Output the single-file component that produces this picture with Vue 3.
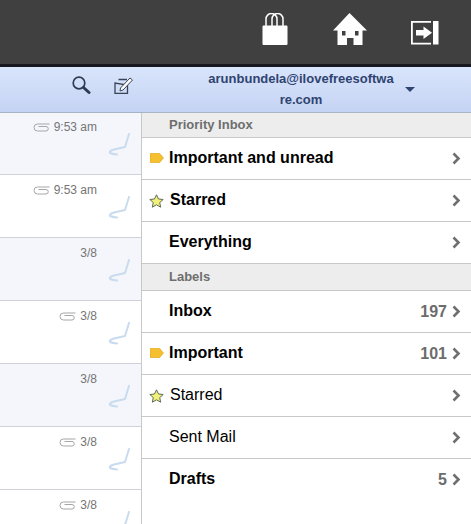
<script setup>
const mails = [
  { time: '9:53 am', clip: true, tint: true },
  { time: '9:53 am', clip: true, tint: false },
  { time: '3/8', clip: false, tint: true },
  { time: '3/8', clip: true, tint: false },
  { time: '3/8', clip: false, tint: true },
  { time: '3/8', clip: true, tint: false },
  { time: '3/8', clip: true, tint: false },
]
const priority = [
  { name: 'Important and unread', icon: 'tag', bold: true },
  { name: 'Starred', icon: 'star', bold: true },
  { name: 'Everything', icon: '', bold: true },
]
const labels = [
  { name: 'Inbox', icon: '', bold: true, count: '197' },
  { name: 'Important', icon: 'tag', bold: true, count: '101' },
  { name: 'Starred', icon: 'star', bold: false },
  { name: 'Sent Mail', icon: '', bold: false },
  { name: 'Drafts', icon: '', bold: true, count: '5' },
]
const sections = [
  { title: 'Priority Inbox', rows: priority },
  { title: 'Labels', rows: labels },
]
</script>

<template>
  <div class="page">
    <header class="top">
      <svg class="ic-bag" width="26" height="33" viewBox="0 0 26 33">
        <path d="M4 13V6a5.500 5.500 0 0 1 11 0v7M10 13V6a5.500 5.500 0 0 1 11 0v7" fill="none" stroke="#fff" stroke-width="1.500"/>
        <path d="M1.500 12.500H24.500a1 1 0 0 1 1 1V31a1 1 0 0 1-1 1H1.500a1 1 0 0 1-1-1V13.500a1 1 0 0 1 1-1z" fill="#fff"/>
      </svg>
      <svg class="ic-home" width="34" height="33" viewBox="0 0 34 33">
        <path fill="#fff" fill-rule="evenodd" d="M16.500 0 34 17.500H29.500V32H20.500V25H14V32H4.500V17.500H0zM9 18v4.500h3.500V18zM22 18v4.500h3.500V18z"/>
      </svg>
      <svg class="ic-exit" width="28" height="24" viewBox="0 0 28 24">
        <path fill="#fff" d="M0 0H20V1.800H1.800V21.700H20V23.500H0zM22 0H27.500V23.500H22z"/>
        <path fill="#fff" d="M5 9H12.500V5.500L21 11.800 12.500 18V14.500H5z"/>
      </svg>
    </header>

    <div class="bar">
      <div class="tools">
        <svg class="ic-search" width="20" height="20" viewBox="0 0 20 20">
          <circle cx="8" cy="8" r="5.800" fill="none" stroke="#2f3b52" stroke-width="1.700"/>
          <path d="M12.500 12.500 18 17.500" stroke="#2f3b52" stroke-width="3" stroke-linecap="round"/>
        </svg>
        <svg class="ic-compose" width="20" height="18" viewBox="0 0 20 18">
          <path d="M4.500 2.500H13M13.500 8V16.300H1V6z" fill="none" stroke="#3a4355" stroke-width="1.300"/>
          <path d="M6.500 11 16 1l2.500 2L9 13 6 14z" fill="#fff" stroke="#3a4355" stroke-width="1"/>
        </svg>
      </div>
      <div class="account">
        <div class="address">arunbundela@ilovefreesoftware.com</div>
        <span class="caret"></span>
      </div>
    </div>

    <div class="body">
      <div class="list">
        <div v-for="(m, i) in mails" :key="i" class="mail" :class="{ tint: m.tint }">
          <div class="meta">
            <svg v-if="m.clip" width="17" height="9" viewBox="0 0 17 9">
              <path d="M16.500 1H4.500a3.300 3.300 0 0 0 0 7H13a2.200 2.200 0 0 0 0-4.500H5.500" fill="none" stroke="#a6a6a6" stroke-width="1"/>
            </svg>
            <span>{{ m.time }}</span>
          </div>
          <svg class="swoosh" width="23" height="23" viewBox="0 0 23 23">
            <path d="M21 1L17 14L6 16.500Q1 18 2 20Q4 21 9 21.500" fill="none" stroke="#c9dbee" stroke-width="2" stroke-linecap="round" stroke-linejoin="round"/>
          </svg>
        </div>
      </div>

      <nav class="menu">
        <section v-for="s in sections" :key="s.title">
          <h2 class="head">{{ s.title }}</h2>
          <div v-for="r in s.rows" :key="r.name" class="row" :class="{ bold: r.bold }">
            <span class="mark" :class="{ star: r.icon === 'star' }">
              <svg v-if="r.icon === 'tag'" width="14" height="10" viewBox="0 0 14 10">
                <path d="M1 .3H9.500L13.500 5 9.500 9.700H1a1 1 0 0 1-1-1V1.300a1 1 0 0 1 1-1z" fill="#f5c02f" stroke="#dba21a" stroke-width=".6"/>
              </svg>
              <svg v-else-if="r.icon === 'star'" width="15" height="14" viewBox="0 0 15 14">
                <path d="M7.500 .8 9.500 5l4.700.5-3.500 3.100 1 4.600-4.200-2.400-4.200 2.400 1-4.600L.8 5.500 5.500 5z" fill="#f2f27a" stroke="#5f6b55" stroke-width="1"/>
              </svg>
            </span>
            <span class="name" :class="{ star: r.icon === 'star' }">{{ r.name }}</span>
            <span class="count">{{ r.count }}</span>
            <svg class="chev" width="9" height="13" viewBox="0 0 9 13">
              <path d="M1.500 1.500 6.500 6.500 1.500 11.500" fill="none" stroke="#6f6f6f" stroke-width="2.600"/>
            </svg>
          </div>
        </section>
      </nav>
    </div>
  </div>
</template>

<style>
html, body { margin: 0; background: #fff; overflow: hidden; }
</style>

<style scoped>
.page {
  width: 471px;
  height: 524px;
  overflow: hidden;
  display: flex;
  flex-direction: column;
  font-family: "Liberation Sans", Arial, sans-serif;
}
.top {
  height: 64px;
  flex: none;
  background: #404040;
  border-bottom: 3px solid #17171f;
  display: flex;
  align-items: flex-start;
}
.ic-bag { margin: 13px 0 0 262px; }
.ic-home { margin: 13px 0 0 45px; }
.ic-exit { margin: 21px 0 0 44px; }
.bar {
  height: 45px;
  flex: none;
  display: flex;
  position: relative;
  z-index: 1;
  background: linear-gradient(#d9e5fb, #c5d3f4);
  border-bottom: 1px solid #a9b3c6;
}
.tools {
  width: 141px;
  flex: none;
  display: flex;
  align-items: flex-start;
  padding-top: 8px;
  box-sizing: border-box;
}
.ic-search { margin-left: 71px; }
.ic-compose { margin-left: 23px; margin-top: 2px; }
.account {
  position: relative;
  flex: 1;
  padding-left: 67px;
}
.address {
  width: 186px;
  padding-top: 1px;
  font-size: 13px;
  font-weight: 700;
  line-height: 21px;
  color: #2f4470;
  text-align: center;
  word-break: break-all;
}
.caret {
  position: absolute;
  left: 264px;
  top: 20px;
  border-left: 5px solid transparent;
  border-right: 5px solid transparent;
  border-top: 5px solid #2f4470;
}
.body {
  flex: 1;
  display: flex;
  min-height: 0;
}
.list {
  width: 141px;
  flex: none;
  overflow: hidden;
  margin-top: -1px;
}
.mail {
  position: relative;
  height: 62px;
  border-bottom: 1px solid #cfd2d8;
  background: #fff;
}
.mail.tint { background: #f4f6fc; }
.meta {
  position: absolute;
  right: 44px;
  top: 8px;
  display: flex;
  align-items: center;
  gap: 4px;
  font-size: 12px;
  line-height: 14px;
  color: #757575;
  white-space: nowrap;
}
.swoosh {
  position: absolute;
  left: 108px;
  top: 21px;
}
.menu {
  flex: 1;
  background: #fff;
  border-left: 1px solid #c8c8c8;
  min-width: 0;
}
.head {
  margin: 0;
  height: 24px;
  padding-left: 27px;
  background: #ededed;
  border-bottom: 1px solid #c8c8c8;
  font-size: 13px;
  font-weight: 700;
  line-height: 24px;
  color: #6e6e6e;
}
section + section .head {
  height: 26px;
  line-height: 26px;
}
.row {
  height: 41px;
  display: flex;
  align-items: center;
  border-bottom: 1px solid #c8c8c8;
  color: #000;
  font-size: 16px;
}
section:last-child .row:last-child { border-bottom: none; }
.row.bold { font-weight: 700; }
.mark {
  width: 27px;
  flex: none;
  display: flex;
  justify-content: center;
  padding-left: 2px;
  padding-bottom: 2px;
  box-sizing: border-box;
}
.mark.star { padding-bottom: 0; }
.name { flex: 1; white-space: nowrap; padding-bottom: 2px; }
.name.star { margin-left: 1px; }
.count {
  font-size: 16px;
  font-weight: 700;
  color: #6c6c6c;
  margin-right: 5px;
}
.chev { margin-right: 10px; flex: none; }
</style>
